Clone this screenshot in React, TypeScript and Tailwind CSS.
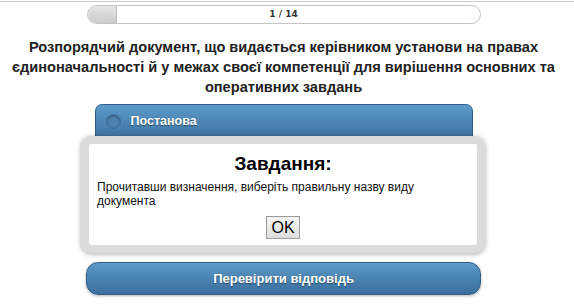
import React from 'react';

const sans = { fontFamily: '"Liberation Sans", Arial, sans-serif' };

function ProgressBar({ current, total }: { current: number; total: number }) {
  return (
    <div className="relative mx-auto mt-[3px] flex h-[19px] w-[394px] items-center justify-center overflow-hidden rounded-full border border-[#c4c4c4] bg-white">
      <div className="absolute inset-y-0 left-0 w-[29px] border-r border-[#bdbdbd] bg-gradient-to-b from-[#e6e6e6] to-[#cbcbcb]" />
      <span
        className="relative text-[9px] font-bold text-[#333]"
        style={{ fontFamily: '"DejaVu Sans", Verdana, sans-serif' }}
      >
        {current} / {total}
      </span>
    </div>
  );
}

export default function App() {
  return (
    <div className="relative h-[307px] w-full bg-white" style={sans}>
      <div className="h-px" />
      <div className="h-px bg-[#c9c9c9]" />
      <div className="pr-[7px]">
        <ProgressBar current={1} total={14} />

        <h1 className="mx-auto mt-[13px] w-[560px] text-center text-[14.6px] font-bold leading-[20px] text-[#222]">
          Розпорядчий документ, що видається керівником установи на правах
          єдиноначальності й у межах своєї компетенції для вирішення основних та
          оперативних завдань
        </h1>

        <div className="mx-auto mt-[7px] h-[158px] w-[378px]">
          <div className="flex h-[40px] items-start rounded-t-[7px] border border-[#2f5f8c] bg-gradient-to-b from-[#5c9ac7] to-[#3a6d9c] px-[10px] pt-[9px]">
            <span className="h-[15px] w-[15px] rounded-full border border-[#3d6e99] bg-[#4a7fae] shadow-[inset_0_1px_2px_rgba(0,0,0,0.35)]" />
            <span className="ml-[10px] text-[12.5px] font-bold leading-[15px] text-white [text-shadow:0_1px_1px_rgba(0,0,0,0.4)]">
              Постанова
            </span>
          </div>
        </div>

        <button className="mx-auto block h-[33px] w-[395px] rounded-[12px] border border-[#2f5f8c] bg-gradient-to-b from-[#5c9ac7] to-[#3a6d9c] text-[13px] font-bold text-white shadow-[0_1px_3px_rgba(0,0,0,0.3)] [text-shadow:0_1px_1px_rgba(0,0,0,0.4)]">
          Перевірити відповідь
        </button>
      </div>

      <div className="absolute left-[81px] top-[136px] flex h-[117px] w-[404px] flex-col rounded-[10px] border-[8px] border-[#dcdcdc] bg-white shadow-[0_1px_5px_rgba(0,0,0,0.35)]">
        <div className="flex flex-col items-center px-[8px] pt-[8px]">
          <h2 className="text-[19px] font-bold leading-[23px] text-black">Завдання:</h2>
          <p className="mt-[5px] self-stretch text-[12px] leading-[14px] text-[#111]">
            Прочитавши визначення, виберіть правильну назву виду документа
          </p>
          <button className="mt-[8px] h-[23px] w-[34px] border border-[#9a9a9a] bg-gradient-to-b from-[#f6f6f6] to-[#dedede] text-[16px] leading-[20px] text-black">
            OK
          </button>
        </div>
      </div>
    </div>
  );
}
